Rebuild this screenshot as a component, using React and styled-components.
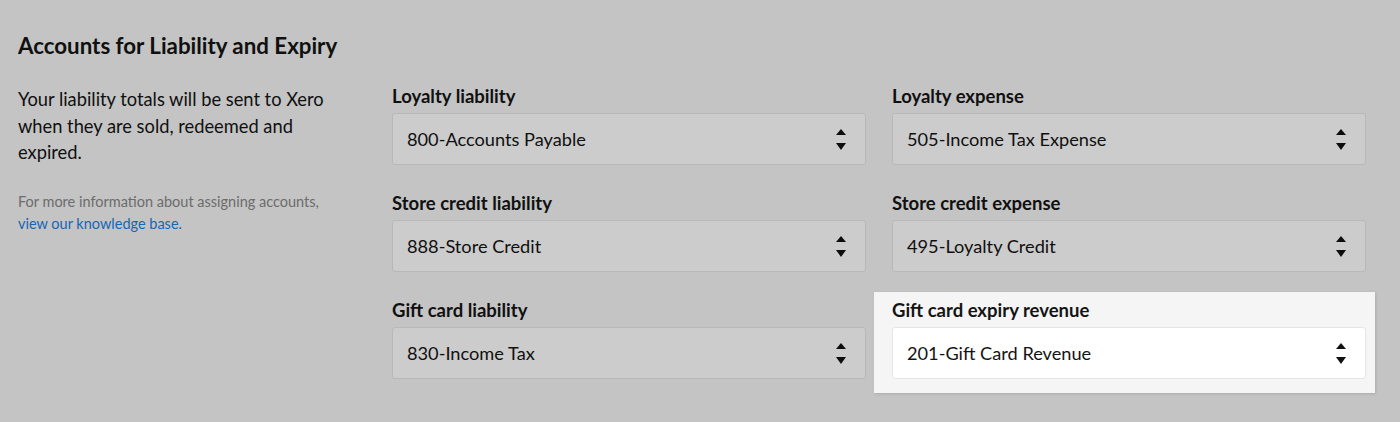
import React from "react";
import styled, { createGlobalStyle } from "styled-components";

const GlobalStyle = createGlobalStyle`
    html, body, #root{
        min-height: 100%;
        height: 100%;
    }
    body{
        margin: 0;
        background: #f5f5f5;
        font-family: Lato, "Open Sans", sans-serif;
        color: #141414;
    }
`;

const fields = [
    { label: "Loyalty liability", value: "800-Accounts Payable" },
    { label: "Loyalty expense", value: "505-Income Tax Expense" },
    { label: "Store credit liability", value: "888-Store Credit" },
    { label: "Store credit expense", value: "495-Loyalty Credit" },
    { label: "Gift card liability", value: "830-Income Tax" },
    { label: "Gift card expiry revenue", value: "201-Gift Card Revenue", highlight: true },
];

function SortArrows(){
    return (
        <svg width="10" height="21" viewBox="0 0 10 21">
            <path d="M0 6 L5 0 L10 6 Z" fill="#111" />
            <path d="M0 14 L10 14 L5 21 Z" fill="#111" />
        </svg>
    )
}

function App(){
    return(
        <Section>
            <GlobalStyle />
            <h1>Accounts for Liability and Expiry</h1>
            <Body>
                <Intro>
                    <p>Your liability totals will be sent to Xero when they are sold, redeemed and expired.</p>
                    <small>
                        For more information about assigning accounts, <a href="#kb">view our knowledge base.</a>
                    </small>
                </Intro>
                <FieldGrid>
                    {fields.map(f => (
                        <Field key={f.label} $highlight={f.highlight}>
                            <Label>{f.label}</Label>
                            <SelectBox>
                                <span>{f.value}</span>
                                <SortArrows />
                            </SelectBox>
                        </Field>
                    ))}
                </FieldGrid>
            </Body>
        </Section>
    )
}

const Section = styled.section`
    box-sizing: border-box;
    min-height: 100vh;
    padding: 32px 34px 0 18px;
    h1{
        margin: 0 0 24px;
        font-size: 22.3px;
        line-height: 28px;
        font-weight: 700;
    }
`;

const Body = styled.div`
    display: grid;
    grid-template-columns: 320px 1fr;
    column-gap: 54px;
    align-items: start;
`;

const Intro = styled.div`
    padding-top: 2px;
    p{
        margin: 0 0 25px;
        font-size: 18.3px;
        line-height: 26.5px;
    }
    small{
        display: block;
        font-size: 14.5px;
        line-height: 22px;
        color: #888888;
    }
    a{
        color: #1d80e2;
        text-decoration: none;
    }
`;

const FieldGrid = styled.div`
    display: grid;
    grid-template-columns: 1fr 1fr;
    column-gap: 26px;
    row-gap: 26px;
`;

const Field = styled.div`
    position: relative;
    ${p => p.$highlight && `
        z-index: 1;
        &::before{
            content: "";
            position: absolute;
            inset: -6px -9px -14px -18px;
            z-index: -1;
            background: #f5f5f5;
            box-shadow: 0 0 0 4000px rgba(0, 0, 0, 0.2), 1px 1px 3px rgba(0, 0, 0, 0.12);
        }
    `}
`;

const Label = styled.div`
    font-size: 18.5px;
    line-height: 24px;
    font-weight: 700;
    margin-bottom: 5px;
`;

const SelectBox = styled.div`
    height: 52px;
    box-sizing: border-box;
    display: flex;
    align-items: center;
    justify-content: space-between;
    padding: 0 19px 0 14px;
    background: #ffffff;
    border: 1px solid #e6e6e6;
    border-radius: 3px;
    font-size: 18.2px;
`;

export default App
